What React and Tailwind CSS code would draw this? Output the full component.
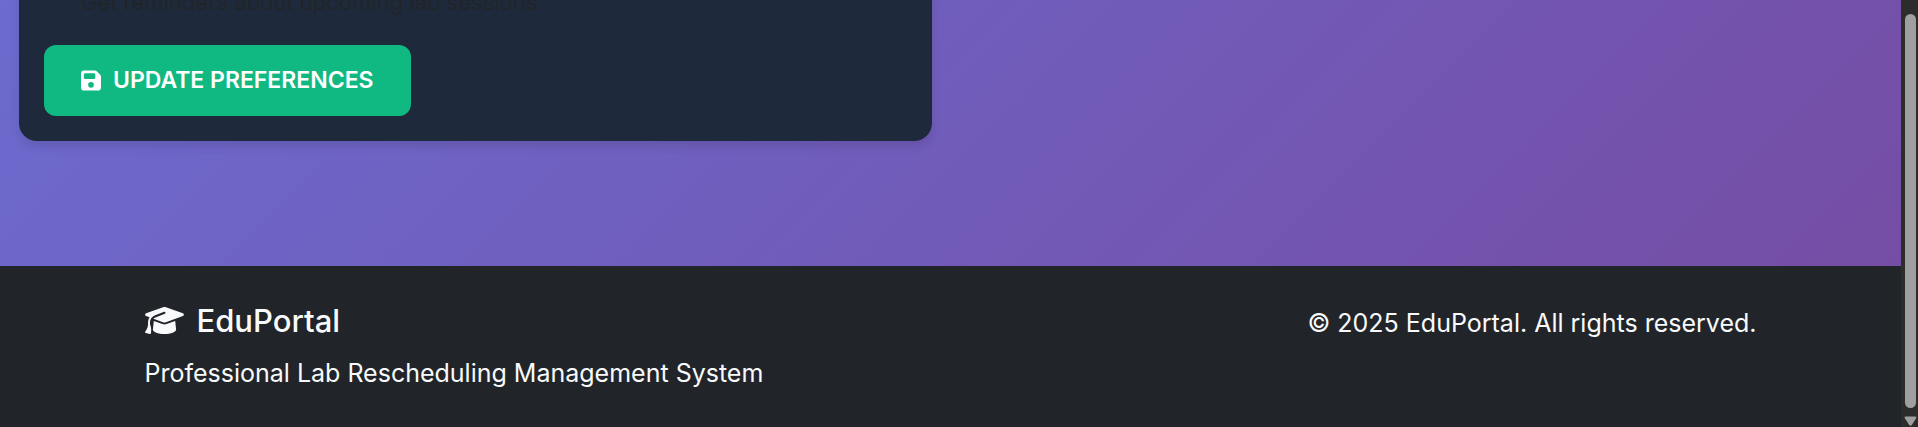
import React from "react";
import { FaFloppyDisk, FaGraduationCap } from "react-icons/fa6";

function Preferences() {
  return (
    <main className="flex h-[266px] shrink-0 items-start overflow-hidden bg-[linear-gradient(135deg,#667eea_-66%,#764ba2_107%)] px-[19px]">
      <section className="-mt-4 w-[49%] rounded-b-[18px] bg-[#1e293b] px-[25px] pb-[25px] shadow-[0_6px_10px_rgba(0,0,0,0.1)]">
        <p className="pl-[37px] text-[22px] leading-[36px] text-[#212529]">
          Get reminders about upcoming lab sessions
        </p>
        <button
          type="button"
          className="mt-[25px] flex h-[71px] items-center gap-3 rounded-xl bg-[#10b981] px-[37px] text-[23px] font-semibold text-white"
        >
          <FaFloppyDisk aria-hidden="true" className="h-[23px] w-5" />
          UPDATE PREFERENCES
        </button>
      </section>
    </main>
  );
}

function Footer() {
  return (
    <footer className="grow bg-[#212529] py-9 text-[25px] leading-[42px] text-[#f8fafc]">
      <div className="mx-auto flex max-w-[1650px] items-start justify-between px-[19px]">
        <div>
          <h5 className="mb-[13px] flex items-center gap-[13px] text-[31px] font-medium leading-[37px]">
            <FaGraduationCap aria-hidden="true" className="h-[31px] w-[39px]" />
            EduPortal
          </h5>
          <p>Professional Lab Rescheduling Management System</p>
        </div>
        <p>© 2025 EduPortal. All rights reserved.</p>
      </div>
    </footer>
  );
}

function ScrollBar() {
  return (
    <div aria-hidden="true" className="flex w-[17px] shrink-0 flex-col items-center bg-[#2c2c2c] pl-[2px] pt-[14px]">
      <div className="w-[11px] grow rounded-full bg-[#9f9f9f]" />
      <svg viewBox="0 0 13 19" className="h-[19px] w-[13px]" fill="#9f9f9f">
        <path d="M1.5 8.5h10q1.500.3.8 1.500l-4.500 7q-1.300 1.600-2.600 0l-4.500-7q-.7-1.200.8-1.500z" />
      </svg>
    </div>
  );
}

export default function App() {
  return (
    <div className="flex h-screen overflow-hidden font-['Inter',sans-serif]">
      <div className="flex min-w-0 grow flex-col">
        <Preferences />
        <Footer />
      </div>
      <ScrollBar />
    </div>
  );
}
